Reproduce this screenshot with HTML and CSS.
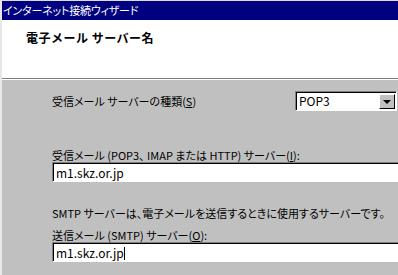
FILE: index.html
```html
<!DOCTYPE html>
<html lang="ja">
<head>
    <meta charset="UTF-8">
    <title>インターネット接続ウィザード</title>
    <link rel="stylesheet" href="styles.css">
</head>
<body>
    <div class="window">
        <div class="titlebar">インターネット接続ウィザード</div>

        <div class="header">
            <h1>電子メール サーバー名</h1>
        </div>

        <div class="content">
            <div class="row">
                <span>受信メール サーバーの種類(<u>S</u>)</span>
                <div class="select">
                    <span class="select-value">POP3</span>
                    <span class="select-btn"><i class="arrow"></i></span>
                </div>
            </div>

            <div class="label label-first">受信メール (POP3、 IMAP または HTTP) サーバー(<u>I</u>):</div>
            <div class="field">m1.skz.or.jp</div>

            <div class="label label-note">SMTP サーバーは、電子メールを送信するときに使用するサーバーです。</div>
            <div class="label">送信メール (SMTP) サーバー(<u>O</u>):</div>
            <div class="field">m1.skz.or.jp<span class="caret"></span></div>
        </div>
    </div>
</body>
</html>
```

FILE: styles.css
```css
body {
    margin: 0;
    background: #c0c0c0;
    font-family: "Noto Sans CJK JP", "Liberation Sans", sans-serif;
    font-size: 11px;
    font-feature-settings: "palt";
    color: #000;
    overflow: hidden;
}
.window {
    height: 275px;
    border-left: 2px solid #e8e8e8;
    border-top: 1px solid #dcdcdc;
    overflow: hidden;
}
.titlebar {
    height: 19px;
    line-height: 19px;
    background: #000080;
    color: #fff;
    padding-left: 1px;
    font-size: 11px;
    letter-spacing: -0.2px;
    white-space: nowrap;
}
.header {
    height: 58px;
    background: #fff;
    border-bottom: 1px solid #808080;
    box-shadow: 0 1px 0 #fff;
}
.header h1 {
    margin: 0;
    padding: 10px 0 0 24px;
    font-size: 12px;
    line-height: 16px;
    font-weight: bold;
    font-feature-settings: normal;
    letter-spacing: 0.5px;
}
.content {
    padding: 12px 0 0 50px;
    white-space: nowrap;
}
.row {
    display: flex;
    justify-content: space-between;
    align-items: center;
    height: 20px;
}
.select {
    display: flex;
    width: 102px;
    height: 20px;
    margin-right: 1px;
    box-sizing: border-box;
    background: #fff;
    border-top: 1px solid #808080;
    border-left: 1px solid #808080;
    border-right: 1px solid #fff;
    border-bottom: 1px solid #fff;
    box-shadow: inset 1px 1px 0 #000;
}
.select-value {
    flex: 1;
    padding: 1px 0 0 3px;
    line-height: 16px;
    font-size: 12px;
}
.select-btn {
    width: 16px;
    margin: 2px 1px 1px 0;
    box-sizing: border-box;
    background: #c0c0c0;
    border-top: 1px solid #fff;
    border-left: 1px solid #fff;
    border-right: 1px solid #000;
    border-bottom: 1px solid #000;
    display: flex;
    align-items: center;
    justify-content: center;
}
.arrow {
    width: 0;
    height: 0;
    border-left: 4px solid transparent;
    border-right: 4px solid transparent;
    border-top: 4px solid #000;
}
.label {
    height: 14px;
    line-height: 14px;
}
.label-first {
    margin-top: 37px;
}
.label-note {
    margin-top: 24px;
    margin-bottom: 8px;
}
.field {
    width: 380px;
    height: 20px;
    box-sizing: border-box;
    background: #fff;
    border-top: 1px solid #808080;
    border-left: 1px solid #808080;
    border-bottom: 1px solid #fff;
    box-shadow: inset 1px 1px 0 #000;
    padding: 1px 0 0 3px;
    line-height: 17px;
    font-size: 12px;
}
.caret {
    display: inline-block;
    width: 1px;
    height: 13px;
    background: #000;
    vertical-align: -2px;
}
```
